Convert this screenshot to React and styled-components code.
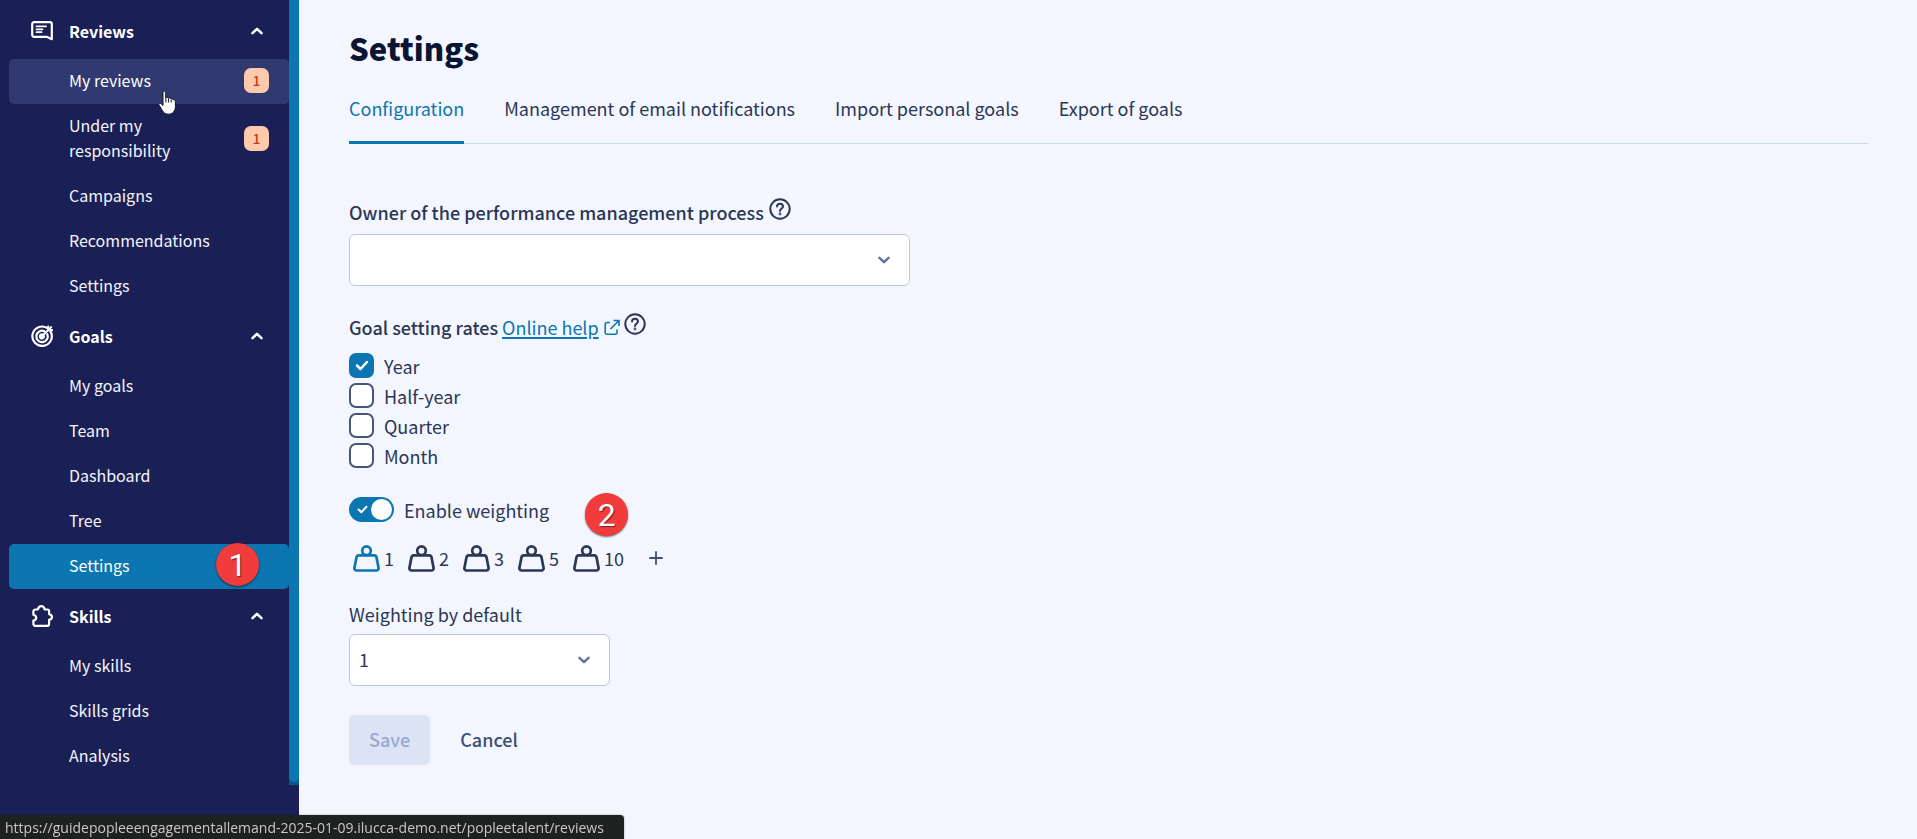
import React, { useState } from 'react';
import styled, { createGlobalStyle, css } from 'styled-components';

const color = {
	navy: '#1a2056',
	navyHover: '#313a70',
	blue: '#0b76b1',
	blueDark: '#07588a',
	page: '#f3f6fe',
	text: '#2b3755',
	title: '#0a1533',
	border: '#b9c8e6',
	line: '#cbd9ec',
	red: '#f23c3c',
};

const GlobalStyle = createGlobalStyle`
  *, *::before, *::after {
    box-sizing: border-box;
  }

  body {
    margin: 0;
    background: ${color.page};
    color: ${color.text};
    font-family: "Noto Sans CJK SC", "Noto Sans", sans-serif;
    font-size: 18px;
    line-height: 28px;
  }

  button, input, select {
    font: inherit;
    color: inherit;
    margin: 0;
  }
`;

const Page = styled.div`
  display: flex;
  min-height: 100vh;
`;

const Sidebar = styled.aside`
  flex: 0 0 299px;
  background: ${color.navy};
  color: #fff;
`;

const ScrollArea = styled.div`
  display: flex;
`;

const Nav = styled.nav`
  flex: 1;
  padding: 4px 0 6px 9px;
`;

const ScrollTrack = styled.div`
  display: flex;
  width: 10px;
  background: ${color.blueDark};
`;

const ScrollThumb = styled.div`
  flex: 1;
  margin-bottom: 3px;
  border-radius: 0 0 5px 5px;
  background: ${color.blue};
`;

const GroupButton = styled.button`
  display: flex;
  align-items: center;
  width: 100%;
  height: 55px;
  padding: 0 26px 2px 22px;
  border: 0;
  background: none;
  color: #fff;
  font-size: 16px;
  font-weight: 700;
  text-align: left;
  cursor: pointer;
`;

const GroupTitle = styled.span`
  flex: 1;
  margin-left: 16px;
`;

const NavList = styled.ul`
  list-style: none;
  margin: 0;
  padding: 0;
`;

const NavItem = styled.li`
  position: relative;
`;

const NavLink = styled.a`
  display: flex;
  align-items: center;
  justify-content: space-between;
  padding: 9px 20px 11px 60px;
  border-radius: 5px;
  color: ${props => (props.$active || props.$hovered ? '#fff' : '#f4f5fb')};
  font-size: 16px;
  line-height: 25px;
  text-decoration: none;
  background: ${props => (props.$active ? color.blue : props.$hovered ? color.navyHover : 'none')};
`;

const NavText = styled.span`
  max-width: 140px;
`;

const Badge = styled.span`
  flex: none;
  width: 25px;
  height: 25px;
  border-radius: 7px;
  background: #ffc9ae;
  color: #bf4015;
  font-size: 14px;
  font-weight: 500;
  text-align: center;
`;

const Callout = styled.span`
  position: absolute;
  display: flex;
  align-items: center;
  justify-content: center;
  width: 43px;
  height: 43px;
  border-radius: 50%;
  background: ${color.red};
  box-shadow: 0 1px 2px rgba(0, 0, 0, 0.6);
  color: #fff;
  font-family: Roboto, "Liberation Sans", sans-serif;
  font-size: 32px;
  text-shadow: 1px 1px 1px rgba(0, 0, 0, 0.5);
  z-index: 1;
  ${props => props.$place === 'nav' && css`
    top: -1px;
    right: 30px;
  `}
  ${props => props.$place === 'form' && css`
    top: -4px;
    left: calc(100% + 36px);
  `}
`;

const Pointer = styled.svg`
  position: absolute;
  top: 32px;
  left: 149px;
  z-index: 1;
`;

const Main = styled.main`
  flex: 1;
  min-width: 0;
  padding: 28px 49px 40px 50px;
`;

const Title = styled.h1`
  margin: 0 0 26px;
  color: ${color.title};
  font-size: 31px;
  font-weight: 900;
  line-height: 40px;
`;

const Tabs = styled.nav`
  display: flex;
  gap: 40px;
  margin-bottom: 54px;
  border-bottom: 1px solid ${color.line};
`;

const Tab = styled.a`
  padding-bottom: 19px;
  margin-bottom: -1px;
  border-bottom: 3px solid ${props => (props.$active ? color.blue : 'transparent')};
  border-radius: 2px 2px 0 0;
  color: ${props => (props.$active ? color.blue : color.text)};
  text-decoration: none;
`;

const Form = styled.form`
  display: flex;
  flex-direction: column;
  align-items: flex-start;
`;

const Field = styled.div`
  width: ${props => props.$width}px;
  max-width: 100%;
  margin-bottom: ${props => props.$space}px;
`;

const LabelRow = styled.div`
  display: flex;
  align-items: flex-start;
  gap: 5px;
  margin-bottom: 6px;
`;

const Label = styled.label`
  font-weight: ${props => (props.$strong ? 500 : 400)};
`;

const SelectBox = styled.div`
  display: grid;
  align-items: center;

  > * {
    grid-area: 1 / 1;
  }

  > svg {
    justify-self: end;
    margin-right: 20px;
    pointer-events: none;
  }
`;

const Select = styled.select`
  appearance: none;
  width: 100%;
  height: 52px;
  padding: 0 40px 2px 9px;
  border: 1px solid ${color.border};
  border-radius: 6px;
  background: #fff;
`;

const Fieldset = styled.fieldset`
  margin: 0 0 24px;
  padding: 0;
  border: 0;
`;

const Legend = styled.legend`
  display: flex;
  align-items: flex-start;
  gap: 4px;
  padding: 0;
  margin-bottom: 10px;
  font-weight: 500;
`;

const HelpLink = styled.a`
  display: flex;
  align-items: center;
  gap: 5px;
  color: ${color.blue};
  font-weight: 400;
  text-decoration: none;

  span {
    text-decoration: underline;
    text-decoration-thickness: 2px;
    text-underline-offset: 2px;
  }
`;

const HelpButton = styled.button`
  display: flex;
  align-items: flex-start;
  height: 30px;
  padding: 0;
  border: 0;
  background: none;
  cursor: pointer;
`;

const CheckRow = styled.label`
  display: flex;
  align-items: center;
  gap: 10px;
  height: 25px;
  margin-bottom: 5px;
`;

const CheckBox = styled.span`
  display: grid;
  place-items: center;

  > * {
    grid-area: 1 / 1;
  }

  > svg {
    pointer-events: none;
  }
`;

const CheckInput = styled.input`
  appearance: none;
  width: 25px;
  height: 25px;
  border: 2px solid #46557a;
  border-radius: 7px;
  background: #fff;

  &:checked {
    border-color: ${color.blue};
    background: ${color.blue};
  }
`;

const SwitchRow = styled.label`
  position: relative;
  display: flex;
  align-items: center;
  gap: 10px;
  height: 25px;
  margin-bottom: 21px;
`;

const SwitchBox = styled(CheckBox)`
  justify-items: start;

  > svg {
    margin-left: 8px;
  }
`;

const SwitchInput = styled.input`
  appearance: none;
  display: flex;
  align-items: center;
  width: 45px;
  height: 25px;
  padding: 0 2px;
  border-radius: 13px;
  background: #8a98b8;

  &::before {
    content: "";
    width: 21px;
    height: 21px;
    border-radius: 50%;
    background: #fff;
  }

  &:checked {
    justify-content: flex-end;
    background: ${color.blue};
  }
`;

const Weights = styled.div`
  display: flex;
  align-items: center;
  gap: 14px;
  margin: 0 0 27px 4px;
`;

const WeightButton = styled.button`
  display: flex;
  align-items: center;
  gap: 4px;
  height: 30px;
  padding: 0;
  border: 0;
  background: none;
  cursor: pointer;

  svg {
    color: ${props => (props.$active ? color.blue : color.text)};
  }
`;

const AddButton = styled.button`
  display: flex;
  margin-left: 11px;
  padding: 0;
  border: 0;
  background: none;
  cursor: pointer;
`;

const Actions = styled.div`
  display: flex;
  gap: 10px;
`;

const ActionButton = styled.button`
  height: 50px;
  padding: 0 20px 2px;
  border: 0;
  border-radius: 5px;
  background: ${props => (props.$filled ? '#dce3f5' : 'transparent')};
  color: ${props => (props.$filled ? '#98a8ce' : '#3f4f73')};
  font-weight: 500;
`;

const StatusBar = styled.div`
  position: fixed;
  left: 0;
  bottom: 0;
  height: 24px;
  padding: 0 20px 0 5px;
  border-top-right-radius: 4px;
  background: #1f2020;
  box-shadow: 0 0 2px rgba(0, 0, 0, 0.4);
  color: #c8c8c8;
  font-family: "Open Sans", "Noto Sans", sans-serif;
  font-size: 14px;
  line-height: 26px;
  z-index: 2;
`;

const ReviewsIcon = () => (
	<svg width="22" height="20" viewBox="0 0 22 20" fill="none" stroke="currentColor" strokeWidth="2.200" strokeLinejoin="round" strokeLinecap="round">
		<path d="M3 1.200h16a1.800 1.800 0 0 1 1.800 1.800v15.200l-5-2.400H3A1.800 1.800 0 0 1 1.200 14V3A1.800 1.800 0 0 1 3 1.200z" />
		<path d="M5.500 5.400h9.500M5.500 8.300h6M5.500 11.200h5" strokeWidth="1.800" />
	</svg>
);

const GoalsIcon = () => (
	<svg width="22" height="22" viewBox="0 0 22 22" fill="none" stroke="currentColor" strokeWidth="2.200" strokeLinecap="round">
		<path d="M16.500 3.200A9.700 9.700 0 1 0 19.600 6.600" />
		<path d="M13.300 6.200A5.700 5.700 0 1 0 16.300 9.200" />
		<path d="M11.200 9.400A2 2 0 1 0 12.900 11" />
		<path d="M11 11.200L20 2.200M17.200 1.500v3.600h3.800" />
	</svg>
);

const SkillsIcon = () => (
	<svg width="22" height="22" viewBox="0 0 22 22" fill="none" stroke="currentColor" strokeWidth="2.200" strokeLinejoin="round">
		<path d="M4.500 4.500h2.400C7.400 2.500 8.600 1.200 10.300 1.200s2.900 1.300 3.400 3.300h2.800a1.600 1.600 0 0 1 1.600 1.600v3c1.700.4 2.900 1.400 2.900 2.900s-1.200 2.500-2.900 2.900v4a1.900 1.900 0 0 1-1.900 1.900H4.400a2 2 0 0 1-2-2v-3.200c1.700-.4 2.800-1.400 2.800-2.900S4.100 10.100 2.400 9.700V6.500a2 2 0 0 1 2.100-2z" />
	</svg>
);

const Chevron = ({ up, stroke = 'currentColor' }) => (
	<svg width="12" height="8" viewBox="0 0 12 8" fill="none" stroke={stroke} strokeWidth="2.500" strokeLinecap="round" strokeLinejoin="round">
		<path d={up ? 'M1.500 6.200L6 1.800l4.500 4.400' : 'M1.500 1.800L6 6.200l4.500-4.400'} />
	</svg>
);

const HelpIcon = () => (
	<svg width="22" height="22" viewBox="0 0 22 22" fill="none" stroke={color.text} strokeWidth="2" strokeLinecap="round">
		<circle cx="11" cy="11" r="9.700" />
		<path d="M8 8.600c0-1.800 1.300-2.900 3-2.900s3 1.100 3 2.800c0 2-3 2.200-3 4.500" />
		<circle cx="11" cy="16" r="0.400" />
	</svg>
);

const ExternalIcon = () => (
	<svg width="16" height="17" viewBox="0 0 16 17" fill="none" stroke="currentColor" strokeWidth="1.600">
		<path d="M6 3.500H3A1.800 1.800 0 0 0 1.200 5.300v8.200A1.800 1.800 0 0 0 3 15.300h8.200a1.800 1.800 0 0 0 1.800-1.800v-3" />
		<path d="M9.500 1.500H15V7M15 1.500L6.500 10" />
	</svg>
);

const CheckIcon = ({ small }) => (
	<svg width={small ? 11 : 14} height={small ? 9 : 11} viewBox="0 0 14 11" fill="none" stroke="#fff" strokeWidth="2.500" strokeLinecap="round" strokeLinejoin="round">
		<path d="M2 5.500l3.500 3.500L12 2" />
	</svg>
);

const WeightIcon = () => (
	<svg width="27" height="27" viewBox="0 0 27 27" fill="none" stroke="currentColor" strokeWidth="2.700" strokeLinejoin="round">
		<circle cx="13.500" cy="5.700" r="4.300" />
		<path d="M5.800 10.400h15.400a2.400 2.400 0 0 1 2.300 1.900l2.100 10.600a2.200 2.200 0 0 1-2.200 2.600H3.600a2.200 2.200 0 0 1-2.200-2.600l2.100-10.600a2.400 2.400 0 0 1 2.300-1.900z" />
	</svg>
);

const PlusIcon = () => (
	<svg width="14" height="14" viewBox="0 0 14 14" stroke="#3f4f73" strokeWidth="1.800" strokeLinecap="round">
		<path d="M7 1v12M1 7h12" />
	</svg>
);

const HandPointer = () => (
	<Pointer width="18" height="24" viewBox="0 0 18 24">
		<path
			d="M5 1.800c0-1 .6-1.500 1.300-1.500S7.700.8 7.700 1.800v5c.3-.7 2.400-.8 2.700.5.500-.7 2.300-.5 2.600.7.600-.5 2.200-.2 2.400 1 .8-.4 2 .1 2 1.500v5.300c0 4-2.600 7.400-6.600 7.400-3.400 0-5.200-1.500-6.500-3.800L.9 13.900c-.6-1.200.8-2.200 2-1.400L5 14.500z"
			fill="#fff"
			stroke="#101426"
			strokeWidth="1"
		/>
		<path d="M7.900 7v4.500M10.600 7.800v3.700M13.200 8.600v3" stroke="#101426" strokeWidth="1" />
	</Pointer>
);

const menu = [
	{
		title: 'Reviews',
		Icon: ReviewsIcon,
		items: [
			{ text: 'My reviews', badge: 1, hovered: true },
			{ text: 'Under my responsibility', badge: 1 },
			{ text: 'Campaigns' },
			{ text: 'Recommendations' },
			{ text: 'Settings' },
		],
	},
	{
		title: 'Goals',
		Icon: GoalsIcon,
		items: [
			{ text: 'My goals' },
			{ text: 'Team' },
			{ text: 'Dashboard' },
			{ text: 'Tree' },
			{ text: 'Settings', active: true, callout: 1 },
		],
	},
	{
		title: 'Skills',
		Icon: SkillsIcon,
		items: [{ text: 'My skills' }, { text: 'Skills grids' }, { text: 'Analysis' }],
	},
];

const tabs = ['Configuration', 'Management of email notifications', 'Import personal goals', 'Export of goals'];
const rates = ['Year', 'Half-year', 'Quarter', 'Month'];
const weights = [1, 2, 3, 5, 10];

const MenuGroup = ({ title, Icon, items }) => (
	<>
		<GroupButton type="button" aria-expanded="true">
			<Icon />
			<GroupTitle>{title}</GroupTitle>
			<Chevron up />
		</GroupButton>
		<NavList>
			{items.map(item => (
				<NavItem key={item.text}>
					<NavLink href="#" $active={item.active} $hovered={item.hovered}>
						<NavText>{item.text}</NavText>
						{item.badge && <Badge>{item.badge}</Badge>}
					</NavLink>
					{item.hovered && <HandPointer />}
					{item.callout && <Callout $place="nav">{item.callout}</Callout>}
				</NavItem>
			))}
		</NavList>
	</>
);

const App = () => {
	const [checked, setChecked] = useState(['Year']);
	const [weighting, setWeighting] = useState(true);
	const [weight, setWeight] = useState(1);

	const toggleRate = rate =>
		setChecked(checked.includes(rate) ? checked.filter(r => r !== rate) : [...checked, rate]);

	return (
		<Page>
			<GlobalStyle />
			<Sidebar>
				<ScrollArea>
					<Nav aria-label="Main">
						{menu.map(group => (
							<MenuGroup key={group.title} {...group} />
						))}
					</Nav>
					<ScrollTrack>
						<ScrollThumb />
					</ScrollTrack>
				</ScrollArea>
			</Sidebar>

			<Main>
				<Title>Settings</Title>
				<Tabs aria-label="Settings sections">
					{tabs.map((tab, i) => (
						<Tab key={tab} href="#" $active={i === 0}>{tab}</Tab>
					))}
				</Tabs>

				<Form onSubmit={e => e.preventDefault()}>
					<Field $width={561} $space={27}>
						<LabelRow>
							<Label htmlFor="owner" $strong>Owner of the performance management process</Label>
							<HelpButton type="button" aria-label="Help about the owner"><HelpIcon /></HelpButton>
						</LabelRow>
						<SelectBox>
							<Select id="owner"><option value="" aria-label="None" /></Select>
							<Chevron stroke="#5f74a3" />
						</SelectBox>
					</Field>

					<Fieldset>
						<Legend>
							Goal setting rates
							<HelpLink href="#">
								<span>Online help</span>
								<ExternalIcon />
							</HelpLink>
							<HelpButton type="button" aria-label="Help about rates"><HelpIcon /></HelpButton>
						</Legend>
						{rates.map(rate => (
							<CheckRow key={rate}>
								<CheckBox>
									<CheckInput type="checkbox" checked={checked.includes(rate)} onChange={() => toggleRate(rate)} />
									{checked.includes(rate) && <CheckIcon />}
								</CheckBox>
								{rate}
							</CheckRow>
						))}
					</Fieldset>

					<SwitchRow>
						<SwitchBox>
							<SwitchInput type="checkbox" role="switch" checked={weighting} onChange={() => setWeighting(!weighting)} />
							{weighting && <CheckIcon small />}
						</SwitchBox>
						Enable weighting
						<Callout $place="form">2</Callout>
					</SwitchRow>

					<Weights>
						{weights.map(w => (
							<WeightButton key={w} type="button" $active={w === weight} onClick={() => setWeight(w)}>
								<WeightIcon />
								{w}
							</WeightButton>
						))}
						<AddButton type="button" aria-label="Add a weighting"><PlusIcon /></AddButton>
					</Weights>

					<Field $width={261} $space={29}>
						<LabelRow>
							<Label htmlFor="default-weight">Weighting by default</Label>
						</LabelRow>
						<SelectBox>
							<Select id="default-weight" value={weight} onChange={e => setWeight(Number(e.target.value))}>
								{weights.map(w => <option key={w} value={w}>{w}</option>)}
							</Select>
							<Chevron stroke="#5f74a3" />
						</SelectBox>
					</Field>

					<Actions>
						<ActionButton type="submit" $filled disabled>Save</ActionButton>
						<ActionButton type="button">Cancel</ActionButton>
					</Actions>
				</Form>
			</Main>

			<StatusBar>https://guidepopleeengagementallemand-2025-01-09.ilucca-demo.net/popleetalent/reviews</StatusBar>
		</Page>
	);
};

export default App;
